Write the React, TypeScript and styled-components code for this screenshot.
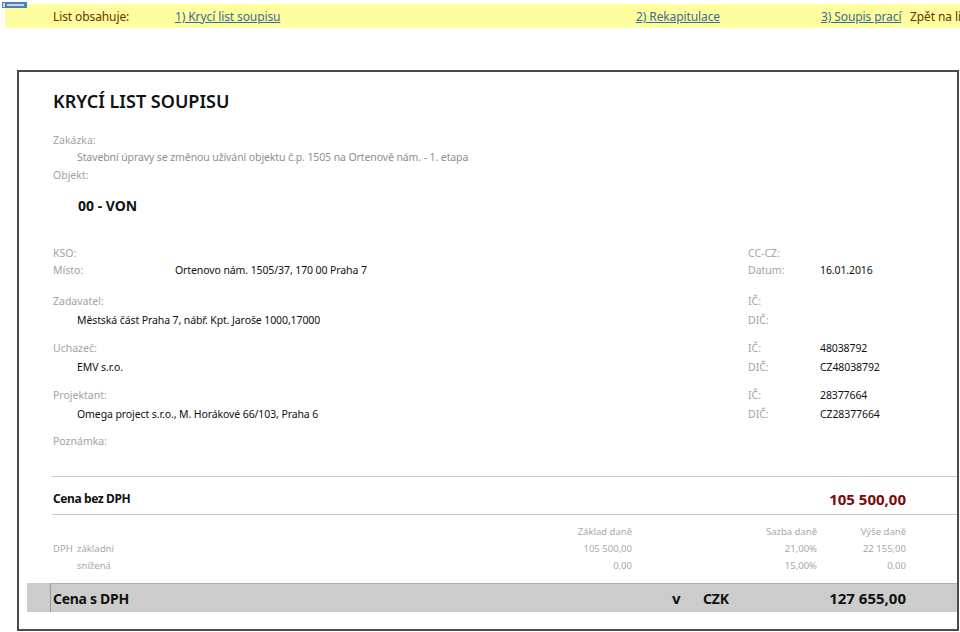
import React from "react";
import styled, { createGlobalStyle } from "styled-components";

const GlobalStyle = createGlobalStyle`
  html, body { margin: 0; padding: 0; background: #ffffff; }
  body { font-family: "Noto Sans", "Liberation Sans", sans-serif; }
`;

const Page = styled.div`
  position: relative;
  width: 960px;
  height: 632px;
  overflow: hidden;
  padding-top: 4px;
  box-sizing: border-box;
`;

const Logo = styled.svg`
  position: absolute;
  left: 2px;
  top: 2px;
`;

const TopBar = styled.nav`
  margin-left: 5px;
  height: 24px;
  background: #fefe9e;
  display: grid;
  grid-template-columns: 48px 122px 461px 185px 89px 1fr;
  align-items: center;
  font-size: 12px;
  letter-spacing: -0.1px;
  white-space: nowrap;
  overflow: hidden;
`;

const BarLabel = styled.span`
  color: #663300;
  overflow: hidden;
`;

const BarLink = styled.a`
  color: #3a6b9b;
  text-decoration: underline;
`;

const Frame = styled.section`
  margin: 42px 0 0 17px;
  width: 942px;
  height: 561px;
  box-sizing: border-box;
  border: 2px solid #4a4a4a;
  display: flex;
  flex-direction: column;
`;

const Row = styled.div<{ $h: number; $mt?: number }>`
  height: ${(p) => p.$h}px;
  margin-top: ${(p) => p.$mt ?? 0}px;
  padding-left: 34px;
  display: flex;
  align-items: center;
  flex-shrink: 0;
  font-size: 10.5px;
  white-space: nowrap;
`;

const Title = styled.h1`
  margin: 0;
  font-size: 18px;
  font-weight: 600;
  color: #111;
`;

const Left = styled.div`
  width: 695px;
  display: flex;
  align-items: center;
`;

const Label = styled.span<{ $w?: number }>`
  color: #a3a3a3;
  width: ${(p) => (p.$w ? `${p.$w}px` : "auto")};
  flex-shrink: 0;
`;

const Value = styled.span<{ $indent?: boolean; $muted?: boolean }>`
  color: ${(p) => (p.$muted ? "#8f8f8f" : "#111")};
  padding-left: ${(p) => (p.$indent ? 24 : 0)}px;
  letter-spacing: -0.1px;
`;

const ObjName = styled.span`
  padding-left: 25px;
  font-size: 14px;
  font-weight: 700;
  color: #111;
`;

const Rule = styled.div<{ $mt: number }>`
  margin: ${(p) => p.$mt}px 0 0 33px;
  border-top: 1px solid #c8c8c8;
  flex-shrink: 0;
`;

const TotalRow = styled.div`
  height: 37px;
  padding: 6px 51px 0 34px;
  box-sizing: border-box;
  display: flex;
  align-items: center;
  justify-content: space-between;
  flex-shrink: 0;
`;

const TotalLabel = styled.span`
  font-size: 12px;
  font-weight: 700;
  letter-spacing: -0.4px;
  color: #111;
`;

const TotalValue = styled.span`
  font-size: 15px;
  font-weight: 700;
  color: #7a0a0a;
`;

const TaxGrid = styled.div`
  margin-top: 8px;
  padding-left: 34px;
  display: grid;
  grid-template-columns: 24px 100px 455px 185px 89px;
  grid-auto-rows: 17px;
  align-items: center;
  font-size: 9.5px;
  color: #a8a8a8;
  white-space: nowrap;
  flex-shrink: 0;
`;

const Num = styled.span`
  text-align: right;
`;

const Band = styled.div`
  margin: 9px 0 0 8px;
  height: 29px;
  background: #cccccc;
  display: flex;
  flex-shrink: 0;
`;

const BandSpacer = styled.div`
  width: 23px;
  flex-shrink: 0;
`;

const BandCell = styled.div`
  flex: 1;
  border-left: 1px solid #9a9a9a;
  border-top: 1px solid #b0b0b0;
  padding: 0 51px 0 2px;
  display: grid;
  grid-template-columns: 619px 31px 60px 1fr;
  align-items: center;
  font-size: 15px;
  font-weight: 700;
  color: #111;
  white-space: nowrap;
`;

const BandLabel = styled.span`
  font-size: 14px;
  letter-spacing: -0.3px;
`;

const BandCurrency = styled.span`
  font-size: 14px;
  letter-spacing: -0.2px;
`;

const BandNum = styled.span`
  text-align: right;
`;

export default function App() {
  return (
    <>
      <GlobalStyle />
      <Page>
        <Logo width="25" height="6" viewBox="0 0 25 6">
          <rect x="0" y="0" width="25" height="6" fill="#4f7fb5" />
          <rect x="1" y="1" width="2" height="4" fill="#cfe0f2" />
          <rect x="5" y="2" width="17" height="2" fill="#e6eef8" opacity="0.8" />
        </Logo>
        <TopBar>
          <span />
          <BarLabel>List obsahuje:</BarLabel>
          <BarLink>1) Krycí list soupisu</BarLink>
          <BarLink>2) Rekapitulace</BarLink>
          <BarLink>3) Soupis prací</BarLink>
          <BarLabel>Zpět na list</BarLabel>
        </TopBar>
        <Frame>
          <Row $h={22} $mt={18}>
            <Title>KRYCÍ LIST SOUPISU</Title>
          </Row>
          <Row $h={17} $mt={19}>
            <Label>Zakázka:</Label>
          </Row>
          <Row $h={18}>
            <Value $indent $muted>
              Stavební úpravy se změnou užívání objektu č.p. 1505 na Ortenově nám. - 1. etapa
            </Value>
          </Row>
          <Row $h={18}>
            <Label>Objekt:</Label>
          </Row>
          <Row $h={20} $mt={11}>
            <ObjName>00 - VON</ObjName>
          </Row>

          <Row $h={17} $mt={29}>
            <Left>
              <Label>KSO:</Label>
            </Left>
            <Label>CC-CZ:</Label>
          </Row>
          <Row $h={17}>
            <Left>
              <Label $w={122}>Místo:</Label>
              <Value>Ortenovo nám. 1505/37, 170 00 Praha 7</Value>
            </Left>
            <Label $w={72}>Datum:</Label>
            <Value>16.01.2016</Value>
          </Row>

          <Row $h={19} $mt={13}>
            <Left>
              <Label>Zadavatel:</Label>
            </Left>
            <Label>IČ:</Label>
          </Row>
          <Row $h={19}>
            <Left>
              <Value $indent>Městská část Praha 7, nábř. Kpt. Jaroše 1000,17000</Value>
            </Left>
            <Label>DIČ:</Label>
          </Row>

          <Row $h={19} $mt={9}>
            <Left>
              <Label>Uchazeč:</Label>
            </Left>
            <Label $w={72}>IČ:</Label>
            <Value>48038792</Value>
          </Row>
          <Row $h={19}>
            <Left>
              <Value $indent>EMV s.r.o.</Value>
            </Left>
            <Label $w={72}>DIČ:</Label>
            <Value>CZ48038792</Value>
          </Row>

          <Row $h={19} $mt={9}>
            <Left>
              <Label>Projektant:</Label>
            </Left>
            <Label $w={72}>IČ:</Label>
            <Value>28377664</Value>
          </Row>
          <Row $h={19}>
            <Left>
              <Value $indent>Omega project s.r.o., M. Horákové 66/103, Praha 6</Value>
            </Left>
            <Label $w={72}>DIČ:</Label>
            <Value>CZ28377664</Value>
          </Row>

          <Row $h={19} $mt={8}>
            <Label>Poznámka:</Label>
          </Row>

          <Rule $mt={26} />
          <TotalRow>
            <TotalLabel>Cena bez DPH</TotalLabel>
            <TotalValue>105 500,00</TotalValue>
          </TotalRow>
          <Rule $mt={0} />

          <TaxGrid>
            <span />
            <span />
            <Num>Základ daně</Num>
            <Num>Sazba daně</Num>
            <Num>Výše daně</Num>

            <span>DPH</span>
            <span>základní</span>
            <Num>105 500,00</Num>
            <Num>21,00%</Num>
            <Num>22 155,00</Num>

            <span />
            <span>snížená</span>
            <Num>0,00</Num>
            <Num>15,00%</Num>
            <Num>0,00</Num>
          </TaxGrid>

          <Band>
            <BandSpacer />
            <BandCell>
              <BandLabel>Cena s DPH</BandLabel>
              <span>v</span>
              <BandCurrency>CZK</BandCurrency>
              <BandNum>127 655,00</BandNum>
            </BandCell>
          </Band>
        </Frame>
      </Page>
    </>
  );
}
